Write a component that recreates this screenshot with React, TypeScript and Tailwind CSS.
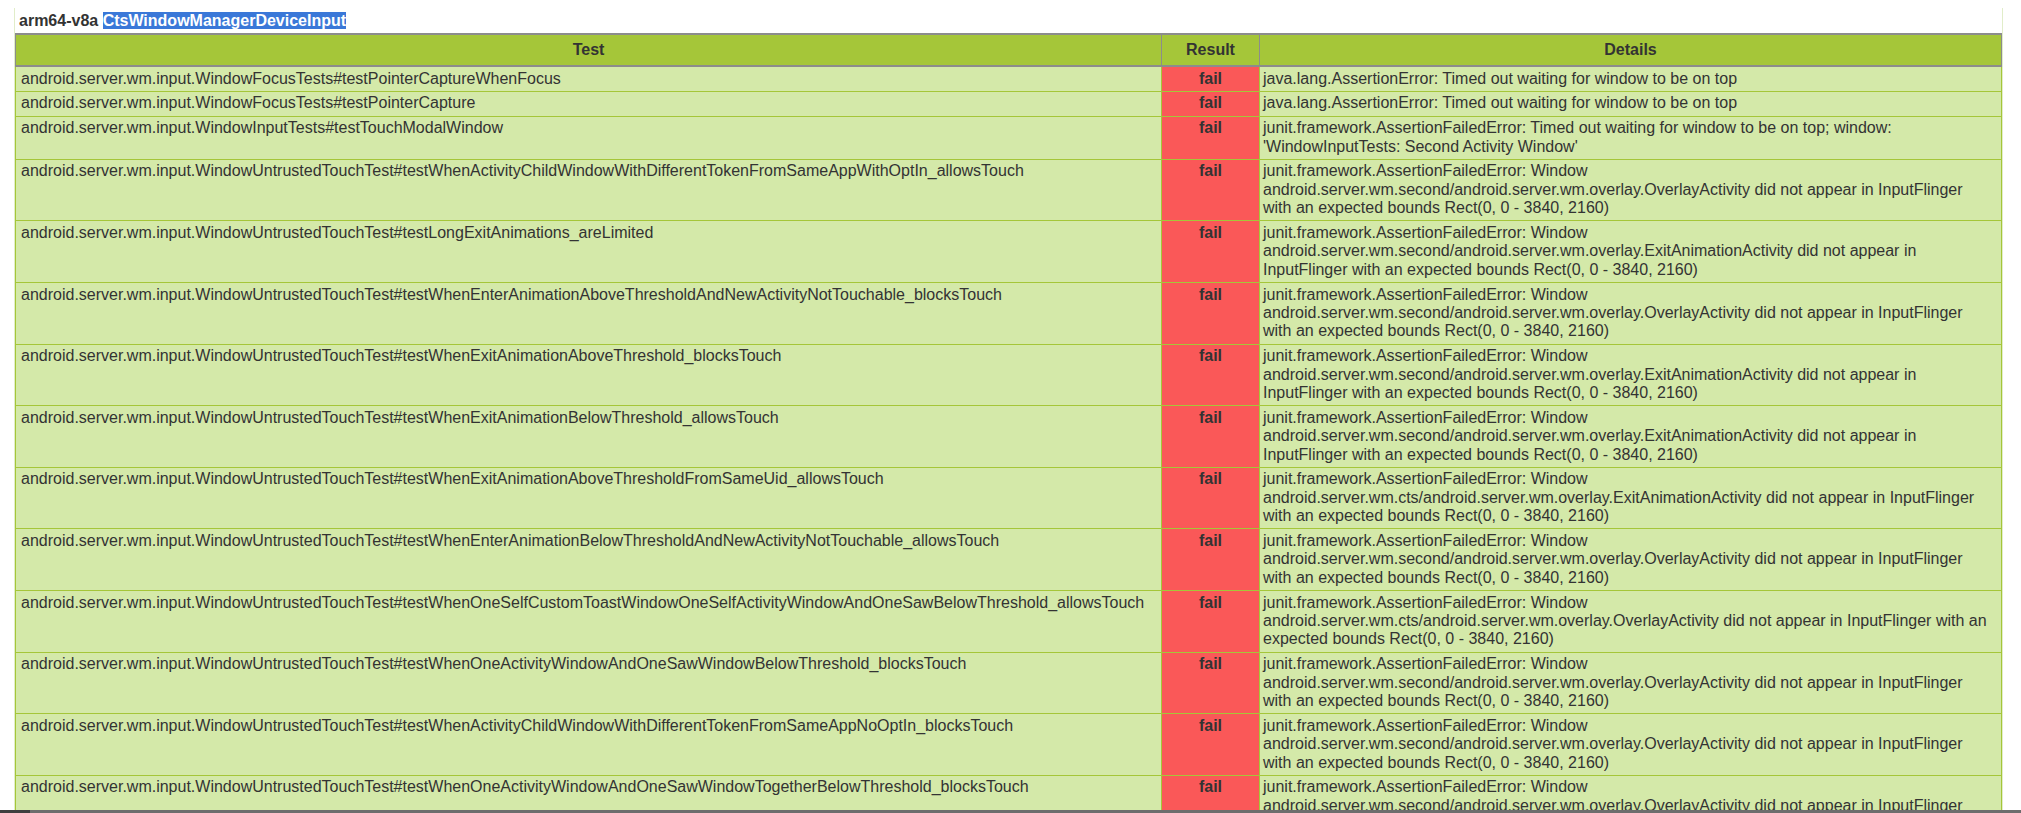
import React from "react";

type Row = { test: string; details: string[] };

const P = "android.server.wm.input.";
const U = "junit.framework.AssertionFailedError: Window";
const END = "with an expected bounds Rect(0, 0 - 3840, 2160)";

const overlay = [
  U,
  "android.server.wm.second/android.server.wm.overlay.OverlayActivity did not appear in InputFlinger",
  END,
];
const exitAnim = [
  U,
  "android.server.wm.second/android.server.wm.overlay.ExitAnimationActivity did not appear in",
  "InputFlinger with an expected bounds Rect(0, 0 - 3840, 2160)",
];

const rows: Row[] = [
  {
    test: P + "WindowFocusTests#testPointerCaptureWhenFocus",
    details: ["java.lang.AssertionError: Timed out waiting for window to be on top"],
  },
  {
    test: P + "WindowFocusTests#testPointerCapture",
    details: ["java.lang.AssertionError: Timed out waiting for window to be on top"],
  },
  {
    test: P + "WindowInputTests#testTouchModalWindow",
    details: [
      "junit.framework.AssertionFailedError: Timed out waiting for window to be on top; window:",
      "'WindowInputTests: Second Activity Window'",
    ],
  },
  {
    test: P + "WindowUntrustedTouchTest#testWhenActivityChildWindowWithDifferentTokenFromSameAppWithOptIn_allowsTouch",
    details: overlay,
  },
  { test: P + "WindowUntrustedTouchTest#testLongExitAnimations_areLimited", details: exitAnim },
  {
    test: P + "WindowUntrustedTouchTest#testWhenEnterAnimationAboveThresholdAndNewActivityNotTouchable_blocksTouch",
    details: overlay,
  },
  { test: P + "WindowUntrustedTouchTest#testWhenExitAnimationAboveThreshold_blocksTouch", details: exitAnim },
  { test: P + "WindowUntrustedTouchTest#testWhenExitAnimationBelowThreshold_allowsTouch", details: exitAnim },
  {
    test: P + "WindowUntrustedTouchTest#testWhenExitAnimationAboveThresholdFromSameUid_allowsTouch",
    details: [
      U,
      "android.server.wm.cts/android.server.wm.overlay.ExitAnimationActivity did not appear in InputFlinger",
      END,
    ],
  },
  {
    test: P + "WindowUntrustedTouchTest#testWhenEnterAnimationBelowThresholdAndNewActivityNotTouchable_allowsTouch",
    details: overlay,
  },
  {
    test: P + "WindowUntrustedTouchTest#testWhenOneSelfCustomToastWindowOneSelfActivityWindowAndOneSawBelowThreshold_allowsTouch",
    details: [
      U,
      "android.server.wm.cts/android.server.wm.overlay.OverlayActivity did not appear in InputFlinger with an",
      "expected bounds Rect(0, 0 - 3840, 2160)",
    ],
  },
  {
    test: P + "WindowUntrustedTouchTest#testWhenOneActivityWindowAndOneSawWindowBelowThreshold_blocksTouch",
    details: overlay,
  },
  {
    test: P + "WindowUntrustedTouchTest#testWhenActivityChildWindowWithDifferentTokenFromSameAppNoOptIn_blocksTouch",
    details: overlay,
  },
  {
    test: P + "WindowUntrustedTouchTest#testWhenOneActivityWindowAndOneSawWindowTogetherBelowThreshold_blocksTouch",
    details: overlay,
  },
];

export default function App() {
  return (
    <div className="h-[813px] flex flex-col overflow-hidden bg-white text-[#333] font-['Liberation_Sans',Arial,sans-serif] text-[16px] leading-[18.4px]">
      <div className="flex-1 min-h-0 overflow-hidden pt-[8px]">
        <div className="ml-[14px] w-[1989px] h-full border-x border-[#e1edc9]">
          <div className="h-[25px] pt-[4px] pl-[4px] font-bold">
            arm64-v8a <span className="bg-[#3a78d8] text-white">CtsWindowManagerDeviceInput</span>
          </div>
          <table className="w-full table-fixed border-collapse">
            <colgroup>
              <col className="w-[1146px]" />
              <col className="w-[98px]" />
              <col />
            </colgroup>
            <thead>
              <tr>
                <th className="h-[32px] bg-[#a5c639] border-y-2 border-x border-[#8c8c8c] font-bold text-center align-middle">
                  Test
                </th>
                <th className="h-[32px] bg-[#a5c639] border-y-2 border-x border-[#8c8c8c] font-bold text-center align-middle">
                  Result
                </th>
                <th className="h-[32px] bg-[#a5c639] border-y-2 border-x border-[#8c8c8c] font-bold text-center align-middle">
                  Details
                </th>
              </tr>
            </thead>
            <tbody>
              {rows.map((r, i) => (
                <tr key={i}>
                  <td className="bg-[#d4e9a9] border border-[#a5c639] align-top py-[2.7px] pl-[5px] pr-[3px] whitespace-nowrap overflow-hidden">
                    {r.test}
                  </td>
                  <td className="bg-[#fa5858] border border-[#a5c639] align-top py-[2.7px] text-center font-bold">
                    fail
                  </td>
                  <td className="bg-[#d4e9a9] border border-[#a5c639] align-top py-[2.7px] pl-[3px] pr-[3px] whitespace-nowrap overflow-hidden">
                    {r.details.map((l, j) => (
                      <div key={j}>{l}</div>
                    ))}
                  </td>
                </tr>
              ))}
            </tbody>
          </table>
        </div>
      </div>
      <div className="h-[3px] flex shrink-0">
        <div className="w-[30px] bg-[#3f3f3f]" />
        <div className="flex-1 bg-[#6d6d6d]" />
      </div>
    </div>
  );
}
